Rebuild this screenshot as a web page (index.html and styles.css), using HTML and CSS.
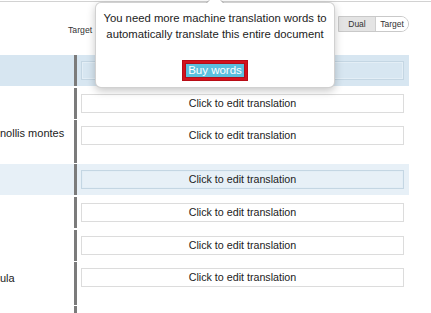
FILE: index.html
```html
<!DOCTYPE html>
<html lang="en">
<head>
<meta charset="utf-8">
<title>Editor</title>
<link rel="stylesheet" href="styles.css">
</head>
<body>
<div class="page">
  <div class="topline"></div>
  <div class="toolbar">
    <span class="label">Target</span>
    <div class="toggle">
      <span class="seg seg-on">Dual</span>
      <span class="seg seg-last">Target</span>
    </div>
  </div>
  <div class="rows">
    <div class="row sel"><div class="src"></div><div class="tgt"><div class="cell">Click to edit translation</div></div></div>
    <div class="row"><div class="src"></div><div class="tgt"><div class="cell">Click to edit translation</div></div></div>
    <div class="row tall"><div class="src">nollis montes</div><div class="tgt"><div class="cell">Click to edit translation</div></div></div>
    <div class="row sel light"><div class="src"></div><div class="tgt"><div class="cell">Click to edit translation</div></div></div>
    <div class="row"><div class="src"></div><div class="tgt"><div class="cell">Click to edit translation</div></div></div>
    <div class="row"><div class="src"></div><div class="tgt"><div class="cell">Click to edit translation</div></div></div>
    <div class="row tall"><div class="src src-low">ula</div><div class="tgt"><div class="cell">Click to edit translation</div></div></div>
    <div class="row"><div class="src"></div><div class="tgt"></div></div>
  </div>
  <div class="popover">
    <p class="pop-text">You need more machine translation words to automatically translate this entire document</p>
    <div class="actions"><span class="buy">Buy words</span></div>
  </div>
</div>
</body>
</html>
```
FILE: styles.css
```css
html, body {
  margin: 0;
  padding: 0;
  background: #fff;
}
.page {
  position: relative;
  width: 431px;
  height: 313px;
  overflow: hidden;
  font-family: "Liberation Sans", Arial, Helvetica, sans-serif;
  color: #222;
}
.topline {
  height: 1px;
  border-bottom: 1px solid #d2d2d2;
}
.toolbar {
  display: flex;
  align-items: flex-start;
  height: 53px;
  padding-left: 68px;
  box-sizing: border-box;
}
.label {
  margin-top: 22px;
  font-size: 8.7px;
  line-height: 12px;
  color: #333;
}
.toggle {
  display: flex;
  margin-left: auto;
  margin-right: 22px;
  margin-top: 14px;
  height: 16px;
  border: 1px solid #c9c9c9;
  border-radius: 0 8px 8px 0;
  box-sizing: border-box;
  overflow: hidden;
  font-size: 8.5px;
  line-height: 14px;
  color: #333;
}
.seg {
  display: block;
  text-align: center;
  background: #fff;
}
.seg-on {
  width: 36px;
  background: #e4e4e4;
}
.seg-last {
  width: 33px;
  border-left: 1px solid #cfcfcf;
  box-sizing: border-box;
}
.rows {
  width: 409px;
}
.row {
  display: flex;
  margin-bottom: 1.67px;
}
.row.sel {
  background: #d7e6f1;
}
.row.sel.light {
  background: #e7f0f7;
}
.src {
  width: 74px;
  flex: none;
  padding: 6px 0;
  font-size: 11px;
  line-height: 15px;
  white-space: nowrap;
  overflow: hidden;
  color: #222;
}
.row.tall .src {
  height: 30.4px;
}
.row.tall .src-low {
  padding-top: 9px;
  height: 27.4px;
}
.tgt {
  flex: 1;
  min-height: 19px;
  border-left: 3px solid #7b7b7b;
  padding: 6px 5px 6px 4px;
}
.cell {
  height: 19px;
  box-sizing: border-box;
  border: 1px solid #dcdcdc;
  background: #fff;
  text-align: center;
  font-size: 10.7px;
  line-height: 17px;
  color: #222;
}
.row.sel .cell {
  background: transparent;
  border-color: #c4d6e3;
  box-shadow: inset 0 0 0 1px #e3eef6;
}
.popover {
  position: absolute;
  left: 95px;
  top: 2px;
  width: 240px;
  height: 86px;
  box-sizing: border-box;
  background: #fff;
  border: 1px solid rgba(0, 0, 0, 0.18);
  border-radius: 6px;
  box-shadow: 0 3px 9px rgba(0, 0, 0, 0.22);
  padding: 7px 0 0;
  text-align: center;
}
.popover::before {
  content: "";
  position: absolute;
  top: -9px;
  left: 110px;
  border-left: 9px solid transparent;
  border-right: 9px solid transparent;
  border-bottom: 9px solid rgba(0, 0, 0, 0.2);
}
.popover::after {
  content: "";
  position: absolute;
  top: -8px;
  left: 111px;
  border-left: 8px solid transparent;
  border-right: 8px solid transparent;
  border-bottom: 8px solid #fff;
}
.pop-text {
  margin: 0;
  font-size: 11.3px;
  line-height: 16px;
  color: #222;
}
.actions {
  margin-top: 20px;
  line-height: 13px;
}
.buy {
  display: inline-block;
  background: #5bc0de;
  color: #fff;
  font-size: 11.5px;
  line-height: 13px;
  padding: 0 2px;
  box-shadow: 0 0 0 1px #b0101a, 0 0 0 3px #d3121d, 0 0 0 4px #b80c16;
}
```
